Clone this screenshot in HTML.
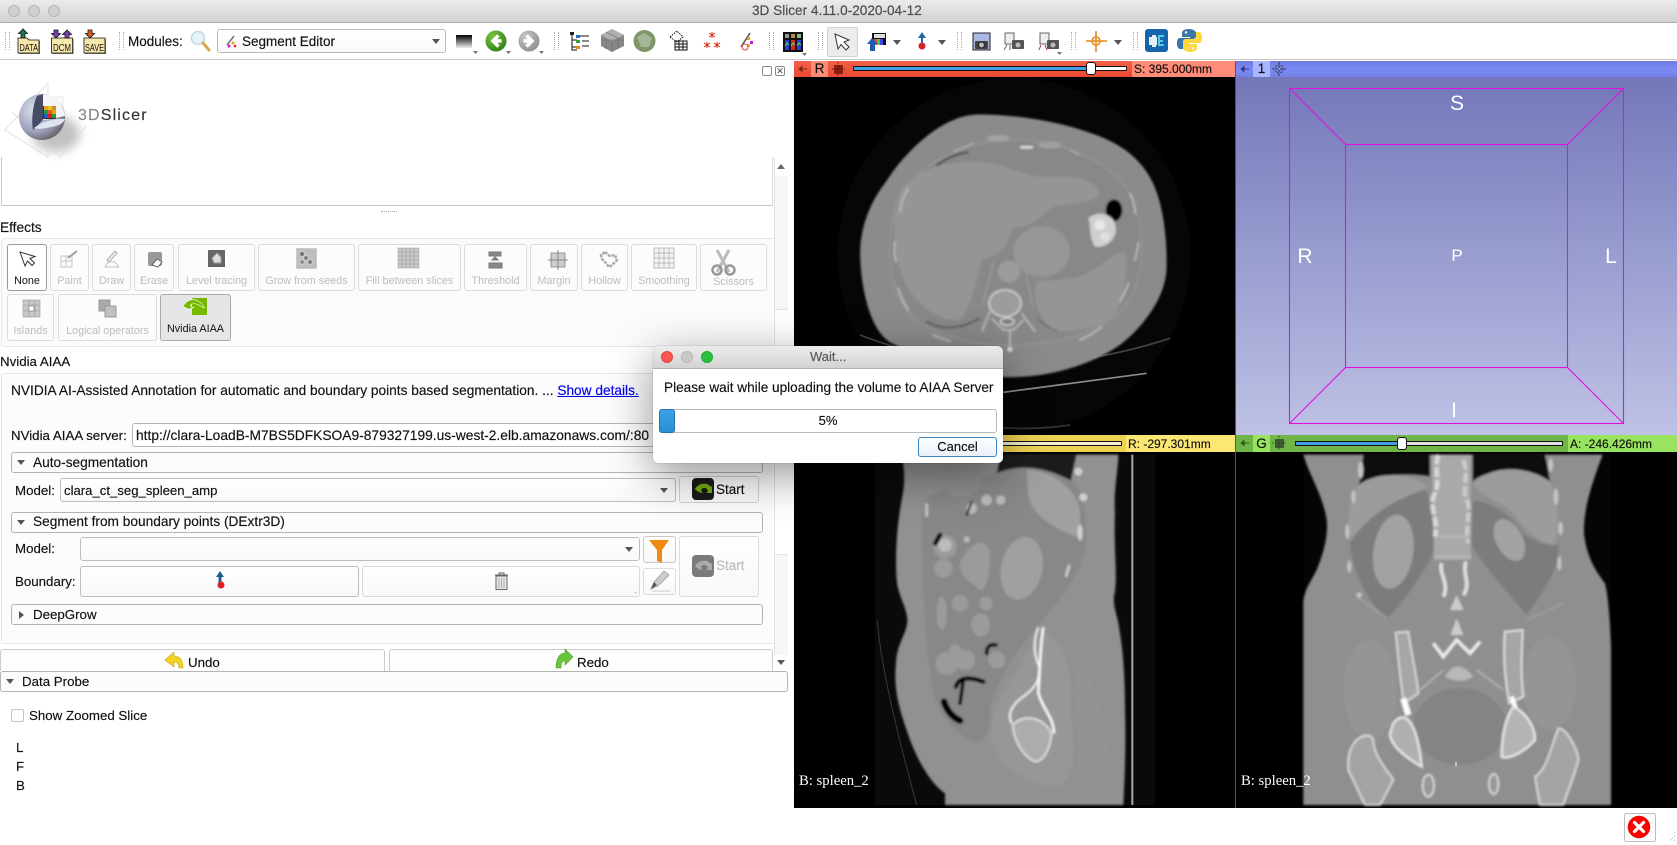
<!DOCTYPE html>
<html lang="en"><head><meta charset="utf-8"><title>3D Slicer</title>
<style>
html,body{margin:0;padding:0;width:1677px;height:845px;overflow:hidden;background:#fff}
body{position:relative;font-family:"Liberation Sans",sans-serif;font-size:13px;color:#111}
div,span.a,a.a{position:absolute;box-sizing:border-box}
.t{white-space:nowrap;line-height:16px;-webkit-text-stroke:.15px currentColor}
.m{font-size:13.7px}
.n{font-size:13.3px}
.grip{width:5px;height:18px;top:32px;border-left:1px dotted #aaa;border-right:1px dotted #aaa}
.fx{border:1px solid #dcdcdc;border-radius:3px;background:#fcfcfc;height:47px;top:244px;color:#bcbcbc;font-size:10.8px;text-align:center;line-height:13px;padding-top:30px;white-space:nowrap}
.cb{border:1px solid #bdbdbd;border-radius:3px;background:linear-gradient(#fff,#f8f8f8)}
.sec{left:11px;width:752px;border:1px solid #b4b4b4;border-radius:3px;background:#fcfcfc;height:21px}
.bar{height:16px;top:61px}
.tri{width:0;height:0;border-left:4px solid transparent;border-right:4px solid transparent;border-top:5px solid #555}
.tr{width:0;height:0;border-top:4px solid transparent;border-bottom:4px solid transparent;border-left:5px solid #555}
.sl{height:5px;border:1px solid #111;border-radius:1px;background:#fff}
.th{width:10px;height:13px;background:#fff;border:1px solid #111;border-radius:3px}
.mm{font-size:12px;line-height:16px;white-space:nowrap;color:#111;-webkit-text-stroke:.15px currentColor}
.lt{width:12px;height:12px;border-radius:50%}
</style></head><body>

<!-- title bar -->
<div style="left:0;top:0;width:1677px;height:23px;background:linear-gradient(#ebebeb,#d2d2d2);border-bottom:1px solid #a9a9a9"></div>
<div class="lt" style="left:8px;top:5px;background:#d0d0d0;border:1px solid #b5b5b5"></div>
<div class="lt" style="left:28px;top:5px;background:#d0d0d0;border:1px solid #b5b5b5"></div>
<div class="lt" style="left:48px;top:5px;background:#d0d0d0;border:1px solid #b5b5b5"></div>
<div class="t" style="left:752px;top:3px;font-size:13.6px;color:#4a4a4a">3D Slicer 4.11.0-2020-04-12</div>

<!-- toolbar -->
<div style="left:0;top:23px;width:1677px;height:37px;background:#fff;border-bottom:1px solid #c8c8c8"></div>
<div class="grip" style="left:5px"></div><div class="grip" style="left:119px"></div><div class="grip" style="left:554px"></div>
<div class="grip" style="left:769px"></div><div class="grip" style="left:818px"></div><div class="grip" style="left:957px"></div>
<div class="grip" style="left:1071px"></div><div class="grip" style="left:1133px"></div>
<div class="t" style="left:128px;top:34px;font-size:13.5px;color:#111">Modules:</div>
<div style="left:217px;top:29px;width:229px;height:24px;border:1px solid #b9b9b9;border-radius:3px;background:linear-gradient(#fff,#f9f9f9)"></div>
<div class="t" style="left:242px;top:34px;font-size:13.5px">Segment Editor</div>
<div class="tri" style="left:432px;top:39px"></div>
<div style="left:827px;top:27px;width:31px;height:30px;background:#ececec;border:1px solid #cfcfcf;border-radius:2px"></div>

<!-- left panel -->
<div style="left:1px;top:157px;width:772px;height:49px;border-left:1px solid #ccc;border-right:1px solid #ddd;border-bottom:1px solid #c8c8c8;background:#fff"></div>
<div style="left:381px;top:211px;width:16px;height:1px;border-top:1px dotted #aaa"></div>
<div class="t" style="left:78px;top:108px;font-size:16px;letter-spacing:1.15px;color:#333"><span style="color:#888">3D</span>Slicer</div>
<div style="left:762px;top:66px;width:10px;height:10px;border:1px solid #888;border-radius:2px"></div>
<div style="left:775px;top:66px;width:10px;height:10px;border:1px solid #888;border-radius:2px;font-size:9px;line-height:8px;text-align:center;color:#444">✕</div>

<!-- scrollbar -->
<div style="left:774px;top:158px;width:14px;height:498px;background:#fff;border-left:1px solid #e3e3e3"></div>
<div style="left:775px;top:176px;width:13px;height:134px;background:#f6f6f6;border-bottom:1px solid #e4e4e4"></div>
<div style="left:775px;top:554px;width:13px;height:101px;background:#f6f6f6;border-top:1px solid #e4e4e4"></div>
<div style="left:777px;top:164px;width:0;height:0;border-left:4px solid transparent;border-right:4px solid transparent;border-bottom:5px solid #666"></div>
<div class="tri" style="left:777px;top:660px"></div>

<div class="t" style="left:0;top:220px;font-size:13.7px">Effects</div>
<div style="left:1px;top:238px;width:772px;height:109px;background:#fbfbfb;border:1px solid #e6e6e6;border-right:0;border-radius:3px 0 0 3px"></div>
<div class="fx" style="left:7px;width:40px;background:#fff;border-color:#9a9a9a;color:#111">None</div>
<div class="fx" style="left:50px;width:39px">Paint</div>
<div class="fx" style="left:92px;width:39px">Draw</div>
<div class="fx" style="left:134px;width:40px">Erase</div>
<div class="fx" style="left:178px;width:77px">Level tracing</div>
<div class="fx" style="left:258px;width:97px">Grow from seeds</div>
<div class="fx" style="left:358px;width:103px">Fill between slices</div>
<div class="fx" style="left:464px;width:63px">Threshold</div>
<div class="fx" style="left:530px;width:48px">Margin</div>
<div class="fx" style="left:581px;width:47px">Hollow</div>
<div class="fx" style="left:631px;width:66px">Smoothing</div>
<div class="fx" style="left:700px;width:67px;padding-top:31px">Scissors</div>
<div class="fx" style="left:7px;width:47px;top:294px">Islands</div>
<div class="fx" style="left:58px;width:99px;top:294px">Logical operators</div>
<div class="fx" style="left:160px;width:71px;top:294px;background:#e6e6e6;border-color:#a9a9a9;color:#111;padding-top:28px">Nvidia AIAA</div>

<div class="t" style="left:0;top:354px;font-size:13.3px">Nvidia AIAA</div>
<div style="left:1px;top:373px;width:772px;height:271px;background:#fcfcfc;border:1px solid #e6e6e6;border-right:0;border-radius:3px 0 0 3px"></div>
<div class="t m" style="left:11px;top:383px">NVIDIA AI-Assisted Annotation for automatic and boundary points based segmentation. ... <span style="color:#00e;text-decoration:underline">Show details.</span></div>

<div class="t n" style="left:11px;top:428px">NVidia AIAA server:</div>
<div style="left:132px;top:423px;width:560px;height:24px;border:1px solid #b5b5b5;border-radius:3px;background:#fff"></div>
<div class="t m" style="left:136px;top:428px;font-size:13.8px">http://clara-LoadB-M7BS5DFKSOA9-879327199.us-west-2.elb.amazonaws.com/:80</div>

<div class="sec" style="top:452px"></div>
<div class="tri" style="left:17px;top:460px"></div>
<div class="t m" style="left:33px;top:455px">Auto-segmentation</div>
<div class="t n" style="left:15px;top:483px">Model:</div>
<div class="cb" style="left:60px;top:478px;width:616px;height:24px"></div>
<div class="t" style="left:64px;top:483px;font-size:13.15px">clara_ct_seg_spleen_amp</div>
<div class="tri" style="left:660px;top:488px"></div>
<div class="cb" style="left:679px;top:476px;width:80px;height:27px;border-color:#d2d2d2"></div>
<div class="t" style="left:716px;top:482px;font-size:13.5px">Start</div>

<div class="sec" style="top:512px"></div>
<div class="tri" style="left:17px;top:520px"></div>
<div class="t m" style="left:33px;top:514px">Segment from boundary points (DExtr3D)</div>
<div class="t n" style="left:15px;top:541px">Model:</div>
<div class="cb" style="left:80px;top:537px;width:560px;height:24px"></div>
<div class="tri" style="left:625px;top:547px"></div>
<div class="cb" style="left:643px;top:536px;width:33px;height:27px;border-color:#c8c8c8"></div>
<div class="t n" style="left:15px;top:574px">Boundary:</div>
<div class="cb" style="left:80px;top:566px;width:279px;height:31px"></div>
<div class="cb" style="left:362px;top:566px;width:278px;height:31px;border-color:#d8d8d8"></div>
<div class="cb" style="left:643px;top:568px;width:33px;height:27px;border-color:#dcdcdc"></div>
<div class="cb" style="left:679px;top:536px;width:80px;height:61px;border-color:#dcdcdc"></div>
<div class="t" style="left:716px;top:558px;font-size:13.5px;color:#bbb">Start</div>

<div class="sec" style="top:604px"></div>
<div class="tr" style="left:19px;top:611px"></div>
<div class="t n" style="left:33px;top:607px">DeepGrow</div>

<div style="left:0;top:649px;width:385px;height:22px;border:1px solid #ccc;border-bottom:0;border-radius:3px 3px 0 0;background:#fdfdfd"></div>
<div style="left:389px;top:649px;width:384px;height:22px;border:1px solid #ccc;border-bottom:0;border-radius:3px 3px 0 0;background:#fdfdfd"></div>
<div class="t n" style="left:188px;top:655px;height:16px;overflow:hidden">Undo</div>
<div class="t n" style="left:577px;top:655px;height:16px;overflow:hidden">Redo</div>

<div style="left:0;top:671px;width:788px;height:21px;border:1px solid #b4b4b4;border-radius:3px;background:#fcfcfc"></div>
<div class="tri" style="left:6px;top:679px"></div>
<div class="t n" style="left:22px;top:674px">Data Probe</div>
<div style="left:11px;top:709px;width:13px;height:13px;border:1px solid #c4c4c4;border-radius:2px;background:#fff"></div>
<div class="t n" style="left:29px;top:708px">Show Zoomed Slice</div>
<div class="t n" style="left:16px;top:740px">L</div>
<div class="t n" style="left:16px;top:759px">F</div>
<div class="t n" style="left:16px;top:778px">B</div>

<!-- viewers -->
<div style="left:794px;top:77px;width:441px;height:358px;background:#000"></div>
<div style="left:794px;top:452px;width:441px;height:356px;background:#000"></div>
<div style="left:1236px;top:452px;width:441px;height:356px;background:#000"></div>
<div style="left:1236px;top:77px;width:441px;height:358px;background:linear-gradient(#7377b9,#bfc2e5)"></div>
<div style="left:1235px;top:61px;width:1px;height:747px;background:#556"></div>

<!-- bars -->
<div class="bar" style="left:794px;width:441px;background:linear-gradient(#f4604a,#e9492f)"></div>
<div class="bar" style="left:811px;width:17px;background:#ff8b78"></div>
<div class="bar" style="left:1132px;width:103px;background:#ff8b78"></div>
<div class="t" style="left:813px;top:61px;font-size:13.5px;width:13px;text-align:center">R</div>
<div class="sl" style="left:853px;top:66px;width:274px;background:#fff"></div>
<div class="sl" style="left:853px;top:66px;width:238px;background:#3f9fe0"></div>
<div class="th" style="left:1086px;top:62px"></div>
<div class="mm" style="left:1134px;top:61px">S: 395.000mm</div>

<div class="bar" style="left:1236px;width:441px;background:linear-gradient(#6d7ae0,#7a8cf4 50%,#7080e6)"></div>
<div class="bar" style="left:1253px;width:17px;background:#aab6ff"></div>
<div class="t" style="left:1255px;top:61px;font-size:13.5px;width:13px;text-align:center">1</div>

<div class="bar" style="left:794px;width:441px;top:435px;height:17px;background:#eed353"></div>
<div class="bar" style="left:1126px;width:109px;top:435px;height:17px;background:#fde774"></div>
<div class="sl" style="left:960px;top:441px;width:162px;background:#f3efd0"></div>
<div class="mm" style="left:1128px;top:436px">R: -297.301mm</div>

<div class="bar" style="left:1236px;width:441px;top:435px;height:17px;background:#70b548"></div>
<div class="bar" style="left:1253px;width:17px;top:435px;height:17px;background:#98e45e"></div>
<div class="bar" style="left:1568px;width:109px;top:435px;height:17px;background:#98e45e"></div>
<div class="t" style="left:1255px;top:436px;font-size:13.5px;width:13px;text-align:center">G</div>
<div class="sl" style="left:1295px;top:441px;width:268px;background:#e2e2e2"></div>
<div class="sl" style="left:1295px;top:441px;width:107px;background:#3f9fe0"></div>
<div class="th" style="left:1397px;top:437px"></div>
<div class="mm" style="left:1570px;top:436px">A: -246.426mm</div>

<!-- graphics layer -->
<svg style="position:absolute;left:0;top:0" width="1677" height="845" viewBox="0 0 1677 845">
<defs>
<filter id="b2" x="-30%" y="-30%" width="160%" height="160%"><feGaussianBlur stdDeviation="2.8"/></filter>
<filter id="sh" x="-50%" y="-50%" width="200%" height="200%"><feGaussianBlur stdDeviation="5"/></filter>
<radialGradient id="sph" cx=".35" cy=".35" r=".8"><stop offset="0" stop-color="#dfe4f0"/><stop offset=".6" stop-color="#9aa0bb"/><stop offset="1" stop-color="#5a4646"/></radialGradient>
<radialGradient id="gr" cx=".35" cy=".3" r=".8"><stop offset="0" stop-color="#7cc544"/><stop offset="1" stop-color="#2d7d15"/></radialGradient>
<radialGradient id="gy" cx=".35" cy=".3" r=".8"><stop offset="0" stop-color="#c8c8c8"/><stop offset="1" stop-color="#8a8a8a"/></radialGradient>
<linearGradient id="lut" x1="0" y1="0" x2="0" y2="1"><stop offset="0" stop-color="#000"/><stop offset="1" stop-color="#eee"/></linearGradient>
</defs>

<!-- toolbar: DATA / DCM / SAVE -->
<g stroke="#111" stroke-width=".8">
<path d="M18 38h9l2 2h10v13H18z" fill="#f6e7aa"/><path d="M23 29l-4.500 4.500h2.500V38h4v-4.500h2.500z" fill="#1f7a4a"/>
<path d="M51.500 38h21v15h-21z" fill="#f6e7aa"/><path d="M56 38l-4.500-4.500h2.500V30h4v3.500h2.500z" fill="#7a3fb5"/><path d="M67 30l-4.500 4.500H65V38h4v-3.500h2.500z" fill="#7a3fb5"/>
<path d="M84 38h21v15H84z" fill="#f6e7aa"/><path d="M90 38l-4.500-4.500H88V30h4v3.500h2.500z" fill="#e35d1a"/>
</g>
<path d="M39.500 41v12.500H19M73 39v14.500H52M105.500 39v14.500H85" stroke="#555" fill="none"/>
<g font-family="Liberation Sans" font-size="10" fill="#111">
<text x="19.500" y="51" textLength="18.500" lengthAdjust="spacingAndGlyphs">DATA</text>
<text x="53" y="51" textLength="18" lengthAdjust="spacingAndGlyphs">DCM</text>
<text x="85" y="51" textLength="19" lengthAdjust="spacingAndGlyphs">SAVE</text>
</g>
<circle cx="198" cy="38" r="6.500" fill="#e6f2fa" stroke="#c6d6e0" stroke-width="1.500"/><path d="M203 43l6 7" stroke="#e0a44c" stroke-width="3" stroke-linecap="round"/>
<path d="M227 45l7-9" stroke="#777" stroke-width="1.500"/><circle cx="233" cy="43" r="1.500" fill="#f2a31b"/><circle cx="229" cy="46" r="1.500" fill="#d41bc7"/><circle cx="235" cy="46" r="1.300" fill="#e22"/>
<rect x="456" y="35" width="16" height="13" fill="url(#lut)"/>
<path d="M473 51h5l-2.500 3zM506 51h5l-2.500 3zM539 51h5l-2.500 3z" fill="#777"/>
<circle cx="496" cy="41" r="10.500" fill="url(#gr)"/><path d="M501.500 41h-6m3-5.500l-5.500 5.500 5.500 5.500" stroke="#fff" stroke-width="3.400" fill="none"/>
<circle cx="529" cy="41" r="10.500" fill="url(#gy)"/><path d="M523.500 41h6m-3-5.500l5.500 5.500-5.500 5.500" stroke="#fff" stroke-width="3.400" fill="none"/>

<!-- toolbar right icons -->
<path d="M572 33v17h5M572 40h5M572 47h5" stroke="#111" fill="none"/><path d="M577 36h12M582 41h7M582 46h7" stroke="#444" stroke-width="1.200"/>
<rect x="570" y="32" width="4" height="3" fill="#222"/><rect x="576" y="35" width="4" height="3" fill="#2470c8"/><rect x="576" y="40" width="4" height="3" fill="#2f9f3a"/><rect x="576" y="46" width="4" height="3" fill="#e8861a"/>
<path d="M601 35l11-6 12 6v11l-12 6-11-6z" fill="#888"/><path d="M601 35l11 6 12-6-12-6z" fill="#b0b0b0"/><path d="M612 41v11M606 32l12 6M606 38v11M618 38v11M601 40l23 0" stroke="#666" stroke-width=".6"/>
<circle cx="644.500" cy="41" r="11" fill="#7d9567"/><path d="M637 37l7-4 8 5-3 9-8 0z" fill="#a6b795"/>
<g fill="none" stroke="#111" stroke-width="1"><path d="M675 41h12v9h-12zM675 44h12M675 47h12M679 41v9M683 41v9"/><path d="M670 37l7-6 6 6-6 5z" stroke-dasharray="1.500 1"/></g>
<g stroke="#d32a10" stroke-width="1" fill="none"><path d="M712 32v6M709 33l6 4M715 33l-6 4M707 42v6M704 43l6 4M710 43l-6 4M717 42v6M714 43l6 4M720 43l-6 4"/></g>
<path d="M741 47l9-14" stroke="#555" stroke-width="1.600"/><rect x="747" y="37" width="3" height="3" fill="#f29a20"/><rect x="750" y="41" width="3" height="3" fill="#d21ed0"/><rect x="747" y="44" width="3" height="3" fill="#e8c020"/><circle cx="745" cy="47" r="3" fill="none" stroke="#d44"/>
<rect x="783" y="32" width="20" height="20" fill="#111"/><rect x="785" y="34" width="4" height="4" fill="#999"/><rect x="791" y="34" width="4" height="4" fill="#b09040"/><rect x="797" y="34" width="4" height="4" fill="#8b8"/>
<path d="M785 40h4v10h-4z" fill="#2a40d0"/><path d="M791 40h4v10h-4z" fill="#d02a2a"/><path d="M797 40h4v10h-4z" fill="#2a40d0"/><path d="M785 46l2-3 2 2M791 46l2-3 2 2M797 46l2-3 2 2" stroke="#5fe05f" fill="none"/><path d="M802 53h5l-2.500 3z" fill="#777"/>
<path d="M835 34L838 49L841 44.500L846 50L849 47L844 42L849 40Z" fill="#fff" stroke="#333" stroke-width="1"/>
<rect x="872" y="33" width="14" height="12" fill="#111"/><rect x="874" y="34" width="11" height="4" fill="#ddd"/><rect x="874" y="39" width="3" height="6" fill="#e44"/><rect x="877" y="39" width="3" height="6" fill="#4c4"/><rect x="880" y="39" width="3" height="6" fill="#44e"/><path d="M872 38l-5 6h3v7h5v-7h3z" fill="#2158b0"/>
<path d="M893 40h8l-4 5zM938 40h8l-4 5zM1114 40h8l-4 5z" fill="#555"/>
<path d="M922 32l-4 6h3v7h2v-7h3z" fill="#1e6aa0"/><circle cx="922" cy="46" r="3.500" fill="#d81f2a"/>
<rect x="973" y="33" width="17" height="17" fill="#a9b6e6" stroke="#222"/><rect x="975" y="41" width="13" height="8" fill="#444" rx="1"/><circle cx="981.500" cy="45" r="3" fill="#bbb" stroke="#222"/>
<rect x="1005" y="33" width="9" height="11" fill="#eee" stroke="#666"/><path d="M1007 45l-3 5M1010 45v5" stroke="#666"/><rect x="1012" y="40" width="12" height="9" fill="#555" rx="1"/><circle cx="1018" cy="45" r="2.500" fill="#bbb"/>
<rect x="1040" y="33" width="9" height="11" fill="#eee" stroke="#666"/><path d="M1041 45l-2 5M1045 45l2 5" stroke="#a33"/><rect x="1047" y="40" width="12" height="9" fill="#555" rx="1"/><circle cx="1053" cy="45" r="2.500" fill="#bbb"/><path d="M1057 52h5l-2.500 3z" fill="#777"/>
<path d="M1096 31v21M1086 41h21" stroke="#e38a17" stroke-width="1.500"/><circle cx="1096" cy="41" r="4" fill="none" stroke="#e38a17" stroke-width="1.500"/>
<rect x="1145" y="29" width="23" height="23" rx="3" fill="#1663ae"/><path d="M1149 37h3v-2h4v2h1v8h-1v2h-4v-2h-3z" fill="#e6f0f8"/><path d="M1158 35h6v2h-4v3h3v2h-3v2h4v2h-6z" fill="#4fd0e0"/>
<path d="M1189 29c-5 0-7 2-7 4v4h8v1h-10c-3 0-3 4-3 6s1 5 3 5h3v-4c0-2 2-3 4-3h6c2 0 3-1 3-3v-6c0-2-3-4-7-4z" fill="#3b77a8"/><circle cx="1186" cy="32.500" r="1.200" fill="#fff"/>
<path d="M1190 52c5 0 7-2 7-4v-4h-8v-1h10c3 0 3-4 3-6s-1-5-3-5h-3v4c0 2-2 3-4 3h-6c-2 0-3 1-3 3v6c0 2 3 4 7 4z" fill="#fdd640"/><circle cx="1193" cy="48.500" r="1.200" fill="#fff"/>

<!-- logo -->
<ellipse cx="56" cy="134" rx="24" ry="18" fill="#777" opacity=".45" filter="url(#sh)"/>
<g fill="none" stroke="#d6d6d6" stroke-width=".7"><path d="M5 130l43-47v74zM12 112l48 45 26-31"/><path d="M44 97h19v20M48 97v20M53 97v20M58 97v20M44 102h19M44 107h19M44 112h19" stroke="#e2e2e2"/></g>
<circle cx="42" cy="117" r="23" fill="url(#sph)"/>
<path d="M40 95c11-2 22 3 25 21l-26 5z" fill="#f4f4f4"/><path d="M37 96l6-2v26l-10 10c-2-10 0-26 4-34z" fill="#474c66"/><path d="M43 106h13v13H43z" fill="#333"/>
<g><rect x="44" y="106" width="4" height="4" fill="#e8a21c"/><rect x="48" y="106" width="4" height="4" fill="#e3c61f"/><rect x="52" y="106" width="4" height="4" fill="#cf8a2a"/><rect x="44" y="110" width="4" height="4" fill="#1e9a3f"/><rect x="48" y="110" width="4" height="4" fill="#e5581d"/><rect x="52" y="110" width="4" height="4" fill="#e8a21c"/><rect x="44" y="114" width="4" height="4" fill="#1a5fcc"/><rect x="48" y="114" width="4" height="4" fill="#d81f2a"/><rect x="52" y="114" width="4" height="4" fill="#2e9a3a"/></g>
<path d="M34 128c8-6 20-10 31-9-2 5-7 7-14 8-5 1-12 3-17 1z" fill="#dfe3ef"/>

<!-- effects icons -->
<path d="M20 252L25 266L27.500 261L32 265.500L34.500 263L30 258.500L35 256.500Z" fill="#fff" stroke="#333"/>
<g opacity=".95" stroke="#b5b5b5" fill="none">
<path d="M61 256h11v11H61zM61 261h11M66 256v11" stroke="#c0c0c0"/><path d="M68 258l9-7" stroke="#999" stroke-width="2"/>
<path d="M105 267h14M109 262h6l4 5M105 267l3-5" stroke="#bbb"/><path d="M107 260l8-9 2 2-8 9z" stroke="#aaa" fill="#eee"/>
</g>
<rect x="148" y="252" width="14" height="14" rx="2" fill="#999"/><path d="M152 265l5-6 5 3-4 5z" fill="#fff" stroke="#666"/>
<rect x="208" y="250" width="17" height="17" fill="#666"/><path d="M212 258l5-5 4 4v6h-7z" fill="#ddd" stroke="#999"/>
<g fill="#aaa" stroke="#fff" stroke-width=".4">
<rect x="296" y="248" width="21" height="21" fill="#bdbdbd"/><rect x="300" y="252" width="4" height="4" fill="#666"/><rect x="304" y="256" width="4" height="4" fill="#777"/><rect x="308" y="260" width="4" height="4" fill="#777"/><rect x="300" y="260" width="4" height="4" fill="#888"/>
</g>
<g stroke="#999" fill="#c8c8c8" stroke-width=".5"><rect x="398" y="248" width="21" height="20"/><path d="M398 252h21M398 256h21M398 260h21M398 264h21M402 248v20M406 248v20M410 248v20M414 248v20" fill="none"/></g>
<path d="M489 252h12v4h-12zM489 263h13v5h-13zM495 257l-3 3h6z" fill="#888" stroke="#777"/>
<rect x="551" y="253" width="14" height="14" fill="#ccc" stroke="#999"/><path d="M558 250v20M548 260h20M551 257v6M565 257v6" stroke="#888"/>
<path d="M605 252l5 4 5-1 2 5-5 5-3 2-4-5-3-3-1-4z" fill="none" stroke="#aaa" stroke-width="2.500" stroke-dasharray="3 1"/>
<g stroke="#aaa" fill="#f4f4f4" stroke-width=".7"><rect x="654" y="248" width="20" height="20"/><path d="M654 253h20M654 258h20M654 263h20M659 248v20M664 248v20M669 248v20" fill="none"/></g>
<path d="M729 250l-12 22M717 250l12 22" stroke="#bbb" stroke-width="3"/><circle cx="717" cy="270" r="4.500" fill="none" stroke="#999" stroke-width="2.500"/><circle cx="730" cy="270" r="4.500" fill="none" stroke="#999" stroke-width="2.500"/>
<g stroke="#999" fill="#c8c8c8" stroke-width=".6"><rect x="23" y="300" width="17" height="17"/><path d="M23 305h17M23 311h17M29 300v17M35 300v17" fill="none"/><rect x="29" y="306" width="5" height="5" fill="#fff" stroke="#777"/></g>
<rect x="99" y="300" width="11" height="11" fill="#aaa" stroke="#999"/><rect x="105" y="306" width="11" height="11" fill="#c0c0c0" stroke="#999"/>
<path d="M192 298h15v17h-15z" fill="#76b900"/><path d="M183 306c4-6 10-8 15-5 4 2 6 5 6 7-5-3-8-5-12-4-3 1-1 4 2 3-4 3-8 2-11-1z" fill="#76b900" stroke="#fff" stroke-width=".6"/>

<!-- Start icons -->
<rect x="692" y="478" width="22" height="22" rx="4" fill="#1a1a1a"/><path d="M695 489c3-5 8-6 12-5l5 3v6h-6c3-1 2-5-2-5-3 0-4 3-1 5-4 0-6-2-8-4z" fill="#6fae10"/>
<rect x="692" y="555" width="22" height="22" rx="4" fill="#7a7a7a"/><path d="M695 566c3-5 8-6 12-5l5 3v6h-6c3-1 2-5-2-5-3 0-4 3-1 5-4 0-6-2-8-4z" fill="#aaa"/>
<!-- filter -->
<path d="M649 540h20l-7 10v13l-5-2v-11z" fill="#f08a12"/>
<!-- pencil -->
<path d="M651 589l3-7 10-11 5 4-11 11z" fill="#ccc" stroke="#aaa"/><path d="M651 589l3-7 3 3z" fill="#555"/><path d="M652 591h18" stroke="#ccc"/>
<!-- boundary arrow -->
<path d="M220 571l-4 6h2.500v7h3v-7h2.500z" fill="#1e5f8f"/><circle cx="221" cy="585" r="3.500" fill="#dc1f2a"/>
<!-- trash -->
<path d="M496 576h11v13.500h-11zM495 575h13M499 575v-2h5v2" fill="#e8e8e8" stroke="#666"/><path d="M499 578v10M501.500 578v10M504 578v10" stroke="#aaa"/>
<path d="M634 592h3l-1.500 2z" fill="#ccc"/>
<!-- undo redo -->
<path d="M165 660l9-8v4c5 0 9 3 9 12h-4c0-4-2-6-5-6v5z" fill="#f2d11f" stroke="#c6a515" stroke-width=".6"/>
<path d="M573 657l-8-8v4c-5 0-9 5-9 15h5c0-5 1-7 4-7v4z" fill="#69c43c" stroke="#4e9d28" stroke-width=".6"/>
<!-- slicer bar icons -->
<path d="M799 69l3-2.500v5zM802 69h5" fill="#7a2a1c" stroke="#7a2a1c"/>
<rect x="834" y="65" width="9" height="9" fill="#8e1f10"/><path d="M838 62v15M832 69h13" stroke="#5a1208" stroke-dasharray="1.500 1.500"/>
<path d="M1241 69l3-2.500v5zM1244 69h5" fill="#333a80" stroke="#333a80"/>
<circle cx="1279" cy="69" r="4" fill="none" stroke="#334" stroke-dasharray="2 1"/><path d="M1279 62v15M1272 69h15" stroke="#334" stroke-dasharray="2 2"/>
<path d="M1241 443l3-2.500v5zM1244 443h5" fill="#2d5a18" stroke="#2d5a18"/>
<rect x="1275" y="439" width="9" height="9" fill="#3d5a30"/><path d="M1279 436v15M1272 443h15" stroke="#2a4420" stroke-dasharray="1.500 1.500"/>

<!-- 3D view -->
<g fill="none" stroke="#e010e0" stroke-width="1.100"><rect x="1289.500" y="88.500" width="334" height="335"/><rect x="1345.500" y="144.500" width="222" height="223"/><path d="M1289.500 88.500l56 56M1623.500 88.500l-56 56M1289.500 423.500l56-56M1623.500 423.500l-56-56"/></g>
<g font-family="Liberation Sans" fill="#fff" text-anchor="middle"><text x="1457" y="110" font-size="21">S</text><text x="1305" y="263" font-size="21">R</text><text x="1457" y="261" font-size="17">P</text><text x="1611" y="263" font-size="21">L</text><text x="1454" y="417" font-size="21">I</text></g>

<!-- AXIAL -->
<g transform="translate(790,55) scale(.33333)">
<circle cx="672" cy="600" r="530" fill="#060606"/>
<path d="M210 840Q650 1010 1140 850" fill="none" stroke="#444" stroke-width="5"/>
<path d="M640 1012L1070 955" stroke="#8c8c8c" stroke-width="5"/>
<path d="M640 1118Q740 1125 840 1110" fill="none" stroke="#333" stroke-width="5"/>
<g filter="url(#b2)">
<path d="M560 180C680 180 800 200 900 235C990 265 1050 310 1085 380C1120 450 1130 560 1128 640C1125 720 1070 800 1000 860C930 915 800 965 660 965C530 965 400 910 300 860C240 820 215 700 212 600C210 510 250 430 290 380C340 300 450 185 560 180Z" fill="#8b8b8b" stroke="#939393" stroke-width="3"/>
<path d="M665 255C820 255 1000 320 1040 470C1065 570 1060 680 1000 760C940 830 800 870 660 870C520 870 400 830 345 760C290 680 295 560 310 480C340 340 520 255 665 255Z" fill="#888" stroke="#939393" stroke-width="6"/>
<!-- liver -->
<path d="M330 410C380 330 520 310 600 325C680 340 720 375 800 365C860 360 920 375 928 415C930 440 850 445 790 455C760 480 720 520 665 520C655 560 640 600 575 612C560 680 545 750 510 795C450 800 390 760 350 690C310 610 300 500 330 410Z" fill="#959595"/>
<!-- stomach -->
<ellipse cx="755" cy="590" rx="85" ry="76" fill="#969696"/>
<!-- spleen -->
<path d="M740 680C800 670 860 680 900 650C950 620 980 590 1005 592C1015 640 1005 720 980 770C940 820 860 835 790 825C745 790 725 730 740 680Z" fill="#959595"/>
<circle cx="657" cy="650" r="33" fill="#9c9c9c"/>
<path d="M610 620L578 750M700 620L730 760" stroke="#9c9c9c" stroke-width="4" fill="none"/>
<!-- vertebra -->
<ellipse cx="645" cy="745" rx="48" ry="40" fill="#9c9c9c" stroke="#cfcfcf" stroke-width="5"/>
<path d="M600 770L575 830M695 775L735 830M605 790L640 825L670 825L700 795M660 825V885" fill="none" stroke="#bcbcbc" stroke-width="5"/>
<ellipse cx="652" cy="800" rx="20" ry="11" fill="#808080" stroke="#ddd" stroke-width="4"/>
<circle cx="660" cy="883" r="7" fill="#ddd"/>
<!-- ribs -->
<g fill="none" stroke="#bdbdbd" stroke-width="5" stroke-linecap="round">
<path d="M355 400Q335 430 330 470"/><path d="M315 560Q310 590 318 620"/><path d="M325 700Q335 735 355 765"/><path d="M430 840Q450 850 480 858"/><path d="M1020 415Q1035 445 1035 475"/><path d="M1045 565Q1042 590 1035 615"/><path d="M1015 685Q1005 715 990 740"/><path d="M935 815Q905 840 870 855"/><path d="M695 277H725" stroke-width="8" stroke="#ddd"/>
</g>
<ellipse cx="625" cy="250" rx="35" ry="10" fill="#a2a2a2"/><ellipse cx="780" cy="270" rx="35" ry="10" fill="#a0a0a0"/><path d="M840 285l30 15M490 290l60-25" stroke="#b0b0b0" stroke-width="4"/>
<path d="M440 332Q480 300 535 292" fill="none" stroke="#333" stroke-width="5"/>
<path d="M410 800Q480 840 570 790" fill="none" stroke="#4a4a4a" stroke-width="6" stroke-dasharray="10 3"/>
<path d="M740 790Q790 830 800 825" fill="none" stroke="#555" stroke-width="3"/>
<!-- contrast + air -->
<ellipse cx="972" cy="466" rx="25" ry="33" fill="#000"/>
<path d="M895 490C930 460 975 485 975 510C985 540 960 580 915 575C895 540 905 520 895 490Z" fill="#cfcfcf"/>
<circle cx="930" cy="510" r="16" fill="#e8e8e8"/><circle cx="945" cy="545" r="14" fill="#e0e0e0"/>
</g>
</g>

<!-- SAGITTAL -->
<g transform="translate(790,440) scale(.33333)">
<rect x="255" y="44" width="840" height="1051" fill="#0a0a0a"/>
<path d="M262 540C270 650 300 800 380 1095" fill="none" stroke="#3a3a3a" stroke-width="3"/>
<g filter="url(#b2)">
<path d="M335 44C345 100 345 130 335 180C320 260 315 350 320 420C325 470 350 500 352 540C352 580 320 610 318 670C310 740 325 800 350 870C375 950 420 1030 465 1060L465 1095H1000C1005 1000 1008 900 1005 800C1005 720 1000 640 990 580C985 530 970 510 972 470C985 420 970 320 975 220C970 150 985 90 985 44Z" fill="#919191"/>
<path d="M620 100C700 70 790 85 840 135L860 44H630Z" fill="#1c1c1c"/>
<path d="M410 170C480 140 560 110 620 100C720 60 800 100 860 130C890 200 900 300 880 350C850 430 790 510 740 560C700 610 640 680 600 800C600 840 610 880 560 910C510 890 470 850 440 790C410 700 400 500 395 300C395 230 400 200 410 170Z" fill="#888"/>
<path d="M710 90C770 90 840 130 865 190C875 230 870 270 860 290C800 270 730 230 715 170Z" fill="#a0a0a0"/>
<ellipse cx="695" cy="385" rx="62" ry="95" transform="rotate(12 695 385)" fill="#a0a0a0"/>
<ellipse cx="515" cy="115" rx="60" ry="55" fill="#909090"/>
<g fill="#9b9b9b"><circle cx="465" cy="320" r="35"/><circle cx="460" cy="385" r="28"/><path d="M510 370C540 300 590 290 600 340C600 400 590 450 570 450C540 420 510 420 510 370Z"/><circle cx="510" cy="490" r="24"/><circle cx="588" cy="490" r="20"/><ellipse cx="455" cy="520" rx="15" ry="50"/><ellipse cx="572" cy="555" rx="28" ry="35"/><circle cx="470" cy="670" r="34"/><circle cx="525" cy="660" r="30"/><circle cx="620" cy="660" r="26"/><circle cx="495" cy="630" r="18"/></g>
<g fill="#bcbcbc"><circle cx="465" cy="315" r="20"/><circle cx="590" cy="180" r="16"/><circle cx="632" cy="180" r="14"/><circle cx="545" cy="205" r="16"/><circle cx="530" cy="298" r="9"/></g>
<!-- muscle -->
<path d="M760 570C830 620 850 700 840 800C850 900 870 1000 800 1040C700 1030 620 980 600 880C610 780 690 680 740 600Z" fill="#979797"/>
<path d="M850 640C900 700 940 800 950 900C960 1000 900 1060 870 1060C860 950 860 800 850 640Z" fill="#939393"/>
<!-- ilium -->
<path d="M745 562C730 600 730 640 748 680C750 720 740 740 700 770C670 790 650 820 665 850" fill="none" stroke="#f0f0f0" stroke-width="6"/>
<path d="M760 562C750 620 750 680 745 760C760 810 790 830 792 880" fill="none" stroke="#fff" stroke-width="7"/>
<path d="M668 855C700 820 760 830 785 880C780 930 760 965 735 965C700 950 670 900 668 855Z" fill="#adadad" stroke="#e4e4e4" stroke-width="5"/>
<g fill="#cfcfcf"><circle cx="865" cy="95" r="12"/><circle cx="880" cy="172" r="12"/><ellipse cx="870" cy="278" rx="8" ry="24"/><path d="M410 190v40" stroke="#c5c5c5" stroke-width="9"/></g>
<path d="M838 375L828 410" stroke="#ddd" stroke-width="6"/>
<!-- gas -->
<g fill="none" stroke="#050505" stroke-linecap="round"><path d="M498 740Q510 700 580 725" stroke-width="13"/><path d="M520 720L510 790" stroke-width="11"/><path d="M462 785Q475 825 510 842" stroke-width="20"/><path d="M590 640Q590 610 618 615" stroke-width="11"/><path d="M436 310L450 285" stroke-width="14"/><path d="M545 185L530 225" stroke-width="6"/></g>
</g>
<path d="M1027 44V1095" stroke="#aaa" stroke-width="6"/>
</g>
<text x="799" y="785" font-family="Liberation Serif" font-size="14.700" fill="#fff">B: spleen_2</text>

<!-- CORONAL -->
<g transform="translate(1230,440) scale(.33333)">
<rect x="220" y="44" width="923" height="1051" fill="#050505"/>
<g filter="url(#b2)">
<path d="M220 44C240 110 280 170 290 240C295 290 280 340 260 390C240 430 222 450 220 490V1095H1143V620C1140 540 1135 470 1125 430C1095 390 1070 350 1062 280C1060 200 1090 120 1118 44Z" fill="#8f8f8f"/>
<path d="M385 135C400 100 395 60 400 44H600V110C540 100 440 100 385 135Z" fill="#111"/>
<path d="M728 125C760 90 880 80 960 125C955 90 950 60 945 44H728Z" fill="#111"/>
<path d="M385 135C440 95 530 95 590 140C540 170 440 190 360 300C345 220 365 170 385 135Z" fill="#9c9c9c"/>
<path d="M730 130C790 70 900 80 960 125C985 180 990 240 975 310C930 320 880 260 850 220C810 180 760 180 730 130Z" fill="#9c9c9c"/>
<path d="M360 310C420 220 510 170 590 150C610 240 620 300 605 350C560 430 510 500 470 535C430 500 370 420 360 310Z" fill="#7c7c7c"/>
<path d="M730 180C790 190 850 230 880 280C920 310 960 320 985 315C990 380 950 440 890 525C830 450 750 370 725 310C730 260 725 220 730 180Z" fill="#7c7c7c"/>
<ellipse cx="490" cy="335" rx="60" ry="112" transform="rotate(8 490 335)" fill="#a2a2a2"/>
<ellipse cx="838" cy="300" rx="40" ry="68" transform="rotate(-28 838 300)" fill="#a2a2a2"/>
<path d="M890 540L1000 490M470 535L380 470" stroke="#a0a0a0" stroke-width="5"/>
<!-- muscle -->
<ellipse cx="420" cy="750" rx="80" ry="150" fill="#959595"/><ellipse cx="960" cy="730" rx="80" ry="140" fill="#959595"/>
<ellipse cx="690" cy="860" rx="140" ry="115" fill="#848484"/>
<!-- spine -->
<path d="M605 44H722V360H612Z" fill="#a9a9a9"/>
<path d="M625 44C610 90 635 130 610 170C600 210 625 240 615 290" fill="none" stroke="#d8d8d8" stroke-width="14" stroke-dasharray="30 8"/>
<path d="M700 60C720 110 690 150 715 190C720 230 705 270 715 310" fill="none" stroke="#ccc" stroke-width="13" stroke-dasharray="30 10"/>
<path d="M625 290H715M615 350H725" stroke="#b8b8b8" stroke-width="7"/>
<path d="M635 370C625 400 660 430 640 470" fill="none" stroke="#e0e0e0" stroke-width="11"/><path d="M708 365C695 400 725 430 700 465" fill="none" stroke="#e0e0e0" stroke-width="11"/>
<path d="M680 465L660 510H700ZM680 535L662 585H700Z" fill="#ccc"/>
<path d="M610 610L640 650L680 600L720 640L750 605" fill="none" stroke="#ececec" stroke-width="10"/>
<path d="M645 710Q680 650 730 710Q690 735 645 710Z" fill="#b8b8b8"/>
<path d="M570 750L640 690M740 690L820 750" stroke="#bdbdbd" stroke-width="4"/>
<!-- iliums -->
<path d="M497 578L535 575C545 650 560 700 565 760L522 790C510 720 505 650 497 578Z" fill="#a6a6a6" stroke="#e0e0e0" stroke-width="5"/>
<path d="M825 575L878 570C875 650 872 710 880 770L838 790C825 720 818 650 825 575Z" fill="#a6a6a6" stroke="#e8e8e8" stroke-width="5"/>
<path d="M520 775L535 825" stroke="#fff" stroke-width="18"/><path d="M845 770L860 815" stroke="#fff" stroke-width="13"/>
<path d="M490 850C520 810 560 830 575 980C540 960 480 920 480 880Z" fill="#b0b0b0" stroke="#eee" stroke-width="6"/>
<path d="M850 800C890 820 915 860 915 900C880 940 830 960 815 950C815 880 830 830 850 800Z" fill="#b4b4b4" stroke="#eee" stroke-width="6"/>
<path d="M355 960C360 890 420 870 430 900C430 950 480 1000 490 1020L450 1095H405L355 990Z" fill="#a4a4a4" stroke="#e0e0e0" stroke-width="5"/>
<path d="M985 865C1010 865 1045 930 1045 960C1030 1020 1010 1060 1000 1095H930L915 1010C950 990 960 930 985 865Z" fill="#a4a4a4" stroke="#e0e0e0" stroke-width="5"/>
<ellipse cx="595" cy="1037" rx="17" ry="33" fill="#999" stroke="#e0e0e0" stroke-width="5"/><ellipse cx="791" cy="1032" rx="14" ry="30" fill="#999" stroke="#e0e0e0" stroke-width="5"/>
<g fill="#c4c4c4"><ellipse cx="392" cy="90" rx="8" ry="25"/><ellipse cx="370" cy="170" rx="6" ry="20"/><ellipse cx="352" cy="275" rx="6" ry="22"/><ellipse cx="358" cy="380" rx="6" ry="18"/><circle cx="388" cy="465" r="8"/><ellipse cx="962" cy="75" rx="7" ry="20"/><ellipse cx="978" cy="170" rx="7" ry="25"/><ellipse cx="992" cy="265" rx="7" ry="20"/><ellipse cx="988" cy="370" rx="6" ry="22"/></g>
</g>
<path d="M678 965v14" stroke="#fff" stroke-width="3"/>
</g>
<text x="1241" y="785" font-family="Liberation Serif" font-size="14.700" fill="#fff">B: spleen_2</text>

<!-- error button -->
<rect x="1624.500" y="813.500" width="31" height="28" rx="2" fill="#fbfbfb" stroke="#bdbdbd"/>
<circle cx="1639" cy="827" r="11" fill="#f00" stroke="#b00" stroke-width=".5"/>
<path d="M1634.500 822.500l9 9m0-9l-9 9" stroke="#fff" stroke-width="3.200" stroke-linecap="round"/>
<path d="M1675 832l-1 1M1675 836l-5 5M1675 840l-1 1" stroke="#aaa" stroke-dasharray="1 1.500"/>
</svg>

<!-- dialog -->
<div style="left:653px;top:346px;width:350px;height:117px;background:#fff;border-radius:6px 6px 5px 5px;box-shadow:0 12px 45px rgba(0,0,0,.42),0 0 1px rgba(0,0,0,.4)"></div>
<div style="left:653px;top:346px;width:350px;height:23px;background:linear-gradient(#ececec,#d3d3d3);border-bottom:1px solid #b0b0b0;border-radius:6px 6px 0 0"></div>
<div class="lt" style="left:661px;top:351px;background:#fc5652;border:1px solid #e0443e"></div>
<div class="lt" style="left:681px;top:351px;background:#c9c9c9;border:1px solid #b8b8b8"></div>
<div class="lt" style="left:701px;top:351px;background:#2ac03f;border:1px solid #1dad2b"></div>
<div class="t" style="left:810px;top:349px;font-size:13px;color:#555">Wait...</div>
<div class="t" style="left:664px;top:380px;font-size:13.6px;color:#111">Please wait while uploading the volume to AIAA Server</div>
<div style="left:659px;top:409px;width:338px;height:24px;border:1px solid #b9b9b9;border-radius:3px;background:#fff"></div>
<div style="left:659px;top:409px;width:16px;height:24px;background:linear-gradient(#3aa1e6,#2b8fd6);border:1px solid #2474b0;border-radius:3px"></div>
<div class="t" style="left:659px;top:413px;width:338px;text-align:center;font-size:13px">5%</div>
<div style="left:918px;top:437px;width:79px;height:20px;border:1px solid #3a86c4;border-radius:3px;background:linear-gradient(#fff,#e8f1f8);text-align:center;font-size:13px;line-height:18px;color:#111;-webkit-text-stroke:.15px #111">Cancel</div>
</body></html>
